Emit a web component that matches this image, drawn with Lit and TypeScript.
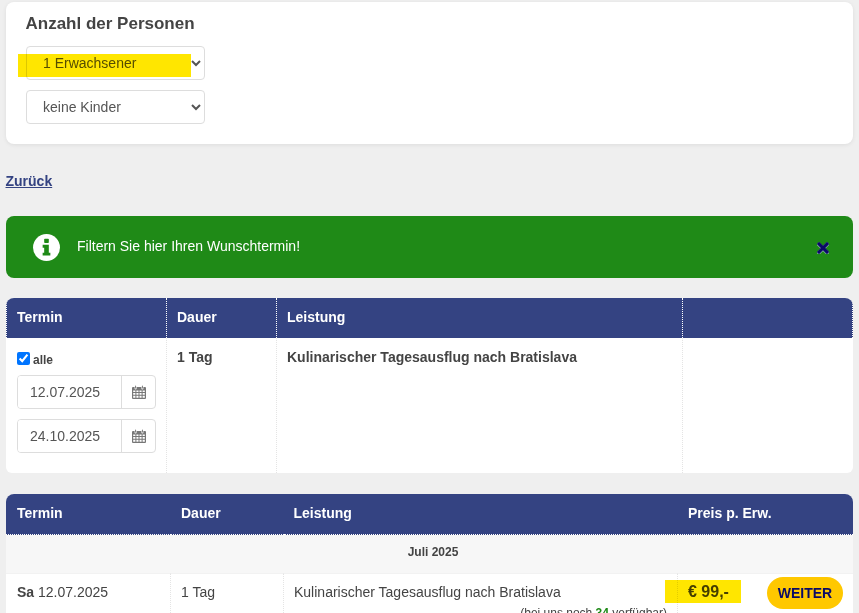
import { LitElement, html, css, svg } from "lit";
import { customElement } from "lit/decorators.js";

const calendar = svg`<svg class="cal" viewBox="0 0 14 14" width="14" height="14" aria-hidden="true">
  <path fill="#777" fill-rule="evenodd" d="M1 2h1.6v1.4a1 1 0 0 0 2 0V2h4.8v1.4a1 1 0 0 0 2 0V2H13a1 1 0 0 1 1 1v10a1 1 0 0 1-1 1H1a1 1 0 0 1-1-1V3a1 1 0 0 1 1-1ZM1.2 5.4v1.7h2.2V5.4Zm3.2 0v1.7h2.1V5.4Zm3.1 0v1.7h2.1V5.4Zm3.1 0v1.7h2.2V5.4ZM1.2 8.1v1.7h2.2V8.1Zm3.2 0v1.7h2.1V8.1Zm3.1 0v1.7h2.1V8.1Zm3.1 0v1.7h2.2V8.1ZM1.2 10.8v2h2.2v-2Zm3.2 0v2h2.1v-2Zm3.1 0v2h2.1v-2Zm3.1 0v2h2.2v-2Z"/>
  <rect x="3.1" y="0.4" width="1" height="3.2" rx=".5" fill="#777"/><rect x="9.9" y="0.4" width="1" height="3.2" rx=".5" fill="#777"/>
</svg>`;

@customElement("app-root")
export class AppRoot extends LitElement {
  static styles = css`
    :host {
      display: block;
      width: 859px;
      height: 613px;
      overflow: hidden;
      background: #efefef;
      font-family: "Liberation Sans", Arial, sans-serif;
      font-size: 14px;
      color: #444;
      box-sizing: border-box;
      padding-top: 2px;
    }
    * { box-sizing: border-box; }
    .card {
      position: relative;
      margin: 0 6px;
      height: 142px;
      background: #fff;
      border-radius: 8px;
      box-shadow: 0 1px 4px rgba(0,0,0,.08);
      padding: 13px 20px 0;
    }
    h2 {
      margin: 0 0 13px -0.5px;
      font-size: 17px;
      line-height: 18px;
      font-weight: 700;
      color: #444;
    }
    select {
      display: block;
      width: 179px;
      height: 34px;
      margin-bottom: 10px;
      padding: 0 0 0 12px;
      background: #fff;
      border: 1px solid #ddd;
      border-radius: 4px;
      font: 14px "Liberation Sans", Arial, sans-serif;
      color: #555;
    }
    .mark {
      position: absolute;
      background: #ffe600;
      mix-blend-mode: multiply;
    }
    .mark-select { left: 12px; top: 52px; width: 173px; height: 23px; }
    .back {
      display: block;
      margin: 29px 0 0 5.5px;
      font-size: 14px;
      line-height: 16px;
      font-weight: 700;
      color: #344382;
      text-decoration: underline;
    }
    .alert {
      margin: 27px 6px 0;
      height: 62px;
      background: #1f8a17;
      border-radius: 8px;
      color: #fff;
      display: flex;
      align-items: center;
      padding: 0 24px 0 27px;
    }
    .alert .info { flex: none; margin-right: 17px; }
    .alert .msg { flex: 1; margin-top: -3px; }
    .alert .close { flex: none; width: 12px; height: 12px; margin-top: 1px; }
    .table {
      margin: 20px 6px 0;
      background: #fff;
      border-radius: 8px 8px 6px 6px;
      overflow: hidden;
      display: grid;
    }
    .t1 { grid-template-columns: 161px 110px 406px 170px; grid-template-rows: 40px 135px; }
    .t2 { margin-top: 21px; grid-template-columns: 165px 113px 394px 175px; grid-template-rows: 41px 38px auto; }
    .th {
      background: #344382;
      color: #fff;
      font-weight: 700;
      font-size: 14px;
      line-height: 16px;
      padding: 11px 10px 0;
    }
    .t1 .th { border-right: 1px dotted #fff; }
    .t1 .th:first-child { padding-left: 10px; border-left: 1px dotted #fff; }
    .t2 .th { border-bottom: 1px dotted #fff; }
    .t2 .th:first-child { padding-left: 11px; }
    .t2 .th:nth-child(3) { padding-left: 9.5px; }
    .td { border-right: 1px dotted #e4e4e4; padding: 11px 10px; font-weight: 700; line-height: 16px; }
    .td:last-child { border-right: none; }
    .filter { padding: 12px 10px 0 11px; font-weight: 400; }
    .all {
      display: flex;
      align-items: center;
      font-size: 12px;
      font-weight: 700;
      height: 16px;
      margin-bottom: 9px;
    }
    .all input { margin: 0 3px 0 0; width: 13px; height: 13px; }
    .all span { padding-top: 4px; }
    .date {
      display: flex;
      height: 34px;
      width: 139px;
      margin-bottom: 10px;
      border: 1px solid #ddd;
      border-radius: 4px;
      overflow: hidden;
    }
    .date input {
      flex: 1;
      min-width: 0;
      border: none;
      outline: none;
      padding: 0 0 0 12px;
      font: 14px "Liberation Sans", Arial, sans-serif;
      color: #555;
      background: #fff;
    }
    .addon {
      flex: none;
      width: 34px;
      border-left: 1px solid #ddd;
      display: flex;
      align-items: center;
      justify-content: center;
    }
    .group {
      grid-column: 1 / -1;
      background: #f7f7f7;
      text-align: center;
      font-size: 12px;
      font-weight: 700;
      line-height: 14px;
      padding: 10px 0 0 7px;
    }
    .row {
      font-weight: 400;
      padding: 10px 10px 0;
      height: 60px;
      border-top: 1px solid #f2f2f2;
    }
    .first { padding-left: 11px; }
    .price {
      position: relative;
      padding: 0;
      display: flex;
      align-items: flex-start;
    }
    .amount {
      margin: 9px 0 0 10px;
      font-size: 16px;
      font-weight: 700;
      line-height: 18px;
      color: #444;
      width: 79px;
    }
    .mark-price { left: -13px; top: 6px; width: 76px; height: 23px; }
    .btn {
      margin-top: 3px;
      width: 76px;
      height: 32px;
      border: none;
      border-radius: 16px;
      background: #ffc800;
      color: #0a0a66;
      font: 700 14px "Liberation Sans", Arial, sans-serif;
      padding: 0;
    }
    .avail {
      display: block;
      text-align: right;
      font-size: 12px;
      line-height: 14px;
      margin-top: 6px;
      white-space: nowrap;
    }
    .avail b { color: #1f8a17; }
  `;

  render() {
    return html`
      <section class="card">
        <h2>Anzahl der Personen</h2>
        <select><option>1 Erwachsener</option></select>
        <select><option>keine Kinder</option></select>
        <div class="mark mark-select"></div>
      </section>
      <a class="back" href="#">Zurück</a>
      <div class="alert">
        <svg class="info" viewBox="0 0 28 28" width="27" height="27" aria-hidden="true">
          <circle cx="14" cy="14" r="14" fill="#fff"/>
          <rect x="11.6" y="5" width="4.8" height="4.4" rx=".8" fill="#1f8a17"/>
          <path fill="#1f8a17" d="M10 11.2h6.4v8.2H18v3h-8v-3h1.6v-5.2H10Z"/>
        </svg>
        <span class="msg">Filtern Sie hier Ihren Wunschtermin!</span>
        <svg class="close" viewBox="0 0 12 12" aria-hidden="true">
          <path d="M2 2l8 8M10 2l-8 8" stroke="#c8d8e8" stroke-width="3.4" stroke-linecap="square" transform="translate(0 .5)"/>
          <path d="M2 2l8 8M10 2l-8 8" stroke="#0a0a66" stroke-width="3.2" stroke-linecap="square"/>
        </svg>
      </div>
      <div class="table t1">
        <div class="th">Termin</div><div class="th">Dauer</div><div class="th">Leistung</div><div class="th"></div>
        <div class="td filter">
          <label class="all"><input type="checkbox" checked /><span>alle</span></label>
          <div class="date"><input value="12.07.2025" /><span class="addon">${calendar}</span></div>
          <div class="date"><input value="24.10.2025" /><span class="addon">${calendar}</span></div>
        </div>
        <div class="td">1 Tag</div>
        <div class="td">Kulinarischer Tagesausflug nach Bratislava</div>
        <div class="td"></div>
      </div>
      <div class="table t2">
        <div class="th">Termin</div><div class="th">Dauer</div><div class="th">Leistung</div><div class="th">Preis p. Erw.</div>
        <div class="group">Juli 2025</div>
        <div class="td row first"><b>Sa</b> 12.07.2025</div>
        <div class="td row">1 Tag</div>
        <div class="td row">Kulinarischer Tagesausflug nach Bratislava
          <span class="avail">(bei uns noch <b>34</b> verfügbar)</span>
        </div>
        <div class="td row price">
          <span class="amount">€ 99,-</span>
          <button class="btn">WEITER</button>
          <div class="mark mark-price"></div>
        </div>
      </div>
    `;
  }
}
